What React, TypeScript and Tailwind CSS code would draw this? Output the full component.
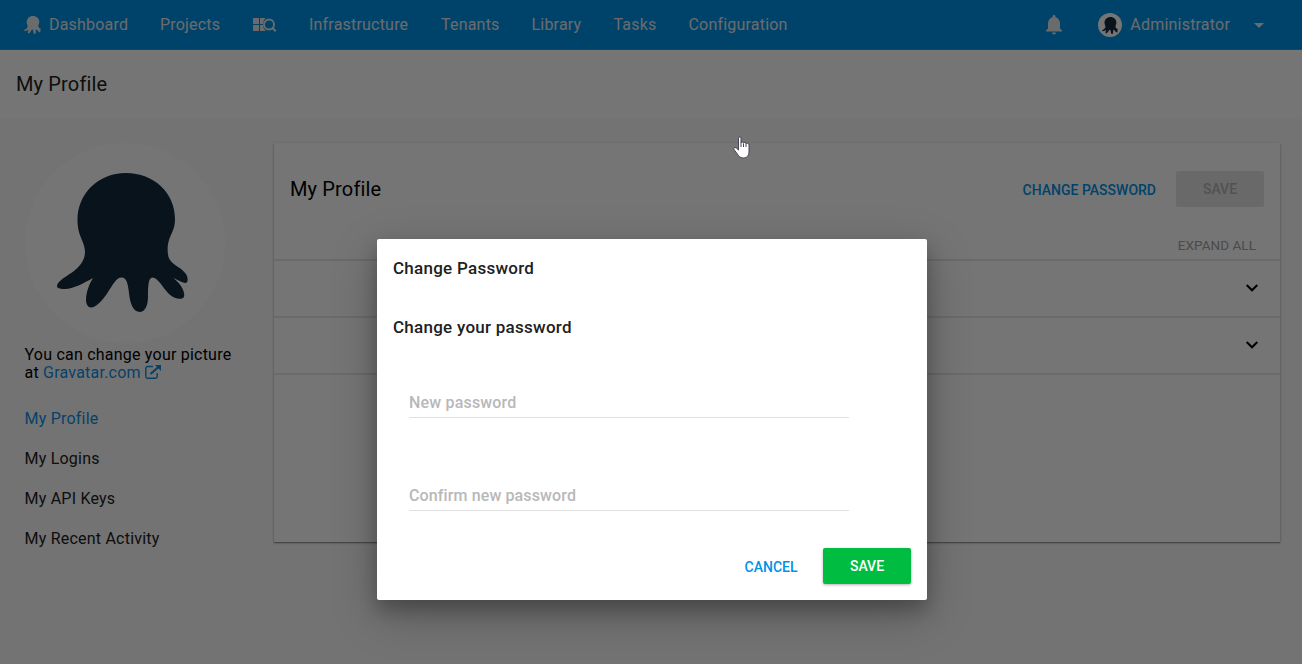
import React from "react";

const OCTOPUS =
  "M126 173C98 173 77.500 194 77.500 220C77.500 237 85 241 85 252C85 260 80 266 74 271C68 275.500 57 281 57 286C57 289 61 289 65 289C73 289 84 283 93 278C89 284 86 293 86 300C86 304 88 307.500 91 307.500C96 307.500 103 300 108 292C113 285 116 277.500 121.500 277.500C127 277.500 128 285 129 293C130 303 133 312 140 312C146 312 148 303 148 297C148 288 148 277.500 152.500 277.500C158 277.500 163 288 169 294C174 298.500 179 299.500 182 298.500C186 297 184 291 181 286C179 283 176 280 173.500 278C178 280 183 283 185.500 283C188 283 188.500 278 186 274C181 267 174 266 170 260C167 256 167 246 169 240C171 234 175 229 175 219C175 193 154 173 126 173Z";

function Octopus({ className }: { className: string }) {
  return (
    <svg viewBox="57 173 131 139" preserveAspectRatio="none" className={className} fill="currentColor">
      <path d={OCTOPUS} />
    </svg>
  );
}

function Header() {
  return (
    <header className="flex h-[50px] items-center border-b border-[#2c9de0] bg-[#0092e6] pt-px pl-6 text-[16px] tracking-[0.2px] text-[#e8eaec]">
      <a className="flex w-[136px] items-center">
        <Octopus className="mr-[8px] h-[18px] w-[17px]" />
        Dashboard
      </a>
      <a className="w-[93px]">Projects</a>
      <a className="w-[56px]">
        <svg width="24" height="16" viewBox="0 0 24 16" fill="currentColor">
          <path d="M1 1h5v6H0V2a1 1 0 0 1 1-1zM7 1h5.500A7 7 0 0 0 10 7H7zM0 8h6v6H1a1 1 0 0 1-1-1zM7 8h3a7 7 0 0 0 3 6H7z" />
          <circle cx="16" cy="7.500" r="5" fill="none" stroke="currentColor" strokeWidth="1.900" />
          <path d="M19.300 10.800l3.500 3.500" stroke="currentColor" strokeWidth="2" />
        </svg>
      </a>
      <a className="w-[132px]">Infrastructure</a>
      <a className="w-[90.500px]">Tenants</a>
      <a className="w-[82px]">Library</a>
      <a className="w-[75px]">Tasks</a>
      <a>Configuration</a>
      <div className="ml-auto flex items-center pr-[38px]">
        <svg width="16" height="19.500" viewBox="4 2.500 16 19.500" fill="currentColor" className="mr-[36px]">
          <path d="M12 22c1.100 0 2-.9 2-2h-4c0 1.100.89 2 2 2zm6-6v-5c0-3.070-1.640-5.640-4.500-6.320V4c0-.83-.67-1.500-1.500-1.500s-1.500.67-1.500 1.500v.68C7.630 5.360 6 7.920 6 11v5l-2 2v1h16v-1l-2-2z" />
        </svg>
        <span className="mr-2 flex size-6 items-center justify-center rounded-full bg-white text-[#152b3d]">
          <Octopus className="h-[17px] w-4" />
        </span>
        Administrator
        <svg width="10" height="5" viewBox="0 0 10 5" fill="currentColor" className="ml-6">
          <path d="M0 0h10L5 5z" />
        </svg>
      </div>
    </header>
  );
}

function Sidebar() {
  return (
    <aside className="w-[274px] shrink-0 pl-6 text-[16px] tracking-[0.22px]">
      <div className="ml-px flex h-[200px] w-[200px] justify-center rounded-full bg-white pt-[30px] pr-[6px] text-[#152b3d]">
        <Octopus className="h-[139px] w-[131px]" />
      </div>
      <p className="mt-[3px] pl-[0.500px] leading-[18px] text-black">
        You can change your picture
        <br />
        at <span className="text-[#0f8fe4]">Gravatar.com</span>
        <svg width="16" height="14" viewBox="0 0 16 14" className="ml-1 inline align-[-0.500px] text-[#0f8fe4]" fill="none" stroke="currentColor">
          <path d="M8 1.500H2.500A1.800 1.800 0 0 0 .8 3.200v8.300a1.800 1.800 0 0 0 1.700 1.700h8a1.800 1.800 0 0 0 1.700-1.700V8" strokeWidth="1.400" />
          <path d="M5.500 9L13.500 2" strokeWidth="2.200" />
          <path d="M10 0h6v6z" fill="currentColor" stroke="none" />
        </svg>
      </p>
      <nav className="mt-[17px] pl-[0.500px] text-[#212121]">
        <a className="flex h-10 items-center text-[#0f8fe4]">My Profile</a>
        <a className="flex h-10 items-center">My Logins</a>
        <a className="flex h-10 items-center">My API Keys</a>
        <a className="flex h-10 items-center">My Recent Activity</a>
      </nav>
    </aside>
  );
}

function ExpanderRow() {
  return (
    <div className="flex h-[57px] items-center justify-end border-b-2 border-[#e6e6e6] pr-[22px] pb-[2px]">
      <svg width="12" height="8" viewBox="0 0 12 8" fill="none" stroke="black" strokeWidth="2">
        <path d="M.7 1L6 6.300 11.300 1" />
      </svg>
    </div>
  );
}

function ProfileCard() {
  return (
    <section className="h-[399px] w-[1006px] bg-white shadow-[0_1px_3px_rgba(0,0,0,0.2),0_1px_1px_rgba(0,0,0,0.3)]">
      <div className="flex h-[118px] flex-col border-b-2 border-[#e6e6e6]">
        <div className="flex items-start pt-[27px] pr-4 pl-4">
          <h2 className="pt-[4px] text-[20px] leading-[30px] tracking-[0.150px] text-black">My Profile</h2>
          <span className="mt-[10px] mr-5 ml-auto text-[14px] leading-5 font-medium text-[#0092e6]">CHANGE PASSWORD</span>
          <button className="mt-[0.600px] h-9 w-[88px] rounded-[2px] bg-[#e5e5e5] pt-px text-[14px] font-medium text-[#b2b2b2]">SAVE</button>
        </div>
        <span className="mt-[28.400px] mr-6 self-end text-[13.500px] leading-5 tracking-[0.050px] text-[#a3a3a3]">EXPAND ALL</span>
      </div>
      <ExpanderRow />
      <ExpanderRow />
    </section>
  );
}

function Dialog() {
  return (
    <div className="flex h-[361.500px] w-[550px] flex-col rounded-[2px] bg-white px-4 text-[16px] shadow-[0_14px_45px_rgba(0,0,0,0.25),0_10px_18px_rgba(0,0,0,0.22)]">
      <h3 className="mt-[17.500px] text-[17px] leading-6 font-medium tracking-[0.260px] text-[#212121]">Change Password</h3>
      <h4 className="mt-[35px] text-[17px] leading-6 font-medium tracking-[0.260px] text-[#212121]">Change your password</h4>
      <div className="mt-[51px] ml-4 h-[28px] w-[440px] border-b border-[#e0e0e0] pt-px leading-6 font-medium tracking-[0.180px] text-[#b8b8b8]">New password</div>
      <div className="mt-[65px] ml-4 h-[28px] w-[440px] border-b border-[#e0e0e0] pt-px leading-6 font-medium tracking-[0.120px] text-[#b8b8b8]">Confirm new password</div>
      <div className="mt-auto mb-4 flex items-center justify-end text-[14px] font-medium">
        <span className="mt-[3px] mr-[25.500px] text-[#0092e6]">CANCEL</span>
        <button className="h-9 w-[88px] rounded-[2px] bg-[#00bd42] pt-px text-white shadow-[0_1px_3px_rgba(0,0,0,0.3)]">SAVE</button>
      </div>
    </div>
  );
}

export default function App() {
  return (
    <div className="relative h-[664px] w-[1302px] overflow-hidden bg-[#fafafa] font-[Roboto,sans-serif]">
      <Header />
      <div className="flex h-[68px] items-center bg-white pl-4 text-[20px] tracking-[0.150px] text-[#212121]">My Profile</div>
      <main className="flex pt-[25px]">
        <Sidebar />
        <ProfileCard />
      </main>
      <div className="absolute inset-0 flex items-start bg-black/54 pt-[238.500px] pl-[377px]">
        <Dialog />
      </div>
      <svg className="absolute top-[136px] left-[733px]" width="18" height="23" viewBox="0 0 18 23" fill="white" stroke="#444455" strokeWidth="1">
        <path d="M5.500 14V2.200C5.500.5 8 .5 8 2.200V7C8.200 5.600 10.500 5.600 10.500 7.200C10.800 6 13 6.200 13 7.800C13.500 6.800 16 7 16 8.800V16C16 19 14 22 10.500 22C7 22 5.500 20 4 17.500L1 13.500C0 12 2.200 11 3.500 12.200Z" />
        <path d="M8 7v4M10.500 7.500V11M13 8v3" />
      </svg>
    </div>
  );
}
